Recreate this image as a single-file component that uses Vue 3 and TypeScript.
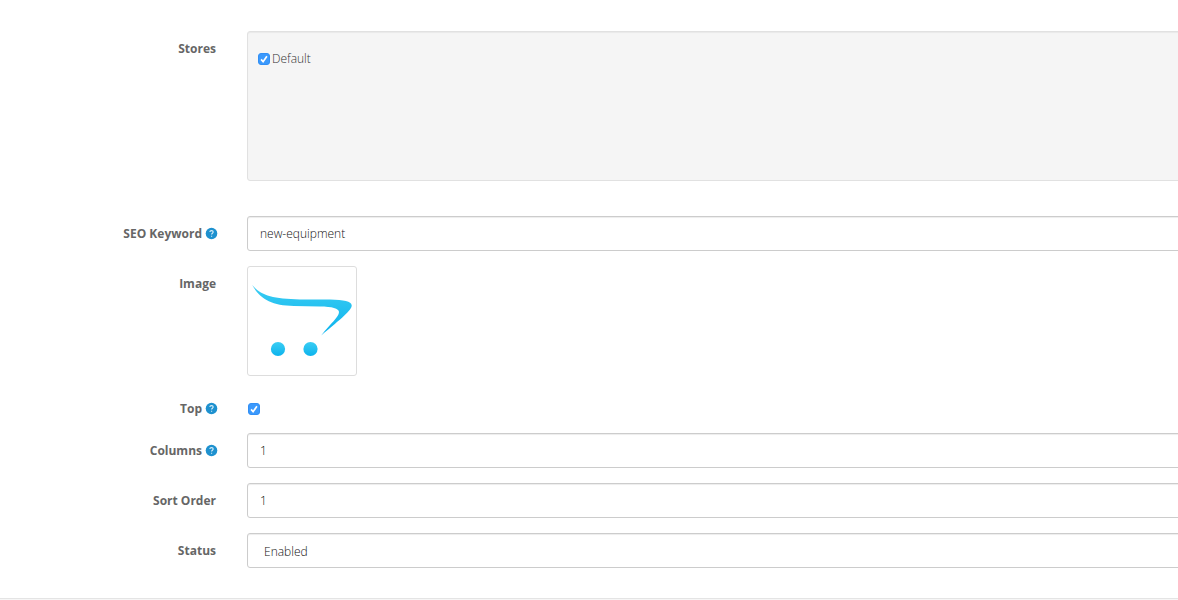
<script setup lang="ts">
import { reactive } from 'vue'

const form = reactive({
  store: true,
  keyword: 'new-equipment',
  top: true,
  columns: '1',
  sortOrder: '1',
  status: '1',
})
</script>

<template>
  <main class="panel">
    <form class="form" @submit.prevent>
      <div class="row" role="group" aria-labelledby="stores-label">
        <span id="stores-label" class="label">Stores</span>
        <div class="field well">
          <label class="option">
            <span class="check">
              <input v-model="form.store" type="checkbox" />
              <svg viewBox="0 0 12 12" aria-hidden="true"><path d="M3.1 6.4 5.1 8.7 8.9 3.2" /></svg>
            </span>
            Default
          </label>
        </div>
      </div>

      <div class="row">
        <label class="label" for="keyword">
          SEO Keyword
          <svg class="help" viewBox="0 0 13 13" aria-hidden="true">
            <circle cx="6.5" cy="6.5" r="5.8" />
            <path d="M4.8 5C5 3.2 8.2 3.2 8.2 5.1C8.2 6.3 6.6 6.3 6.6 7.6M6.6 8.7V9.8" />
          </svg>
        </label>
        <input id="keyword" v-model="form.keyword" class="field control" type="text" />
      </div>

      <div class="row">
        <span class="label">Image</span>
        <div class="field">
          <button class="thumb" type="button" aria-label="Image">
            <svg viewBox="0 0 100 100" aria-hidden="true">
              <defs>
                <linearGradient id="swoosh" x1="0" y1="0" x2="0" y2="1">
                  <stop offset="0" stop-color="#3bcdf3" />
                  <stop offset="1" stop-color="#0cb3ed" />
                </linearGradient>
              </defs>
              <path
                fill="url(#swoosh)"
                d="M.2 14C8 23.8 20 28.2 48 28.4L78 28.6C92 29 99.3 30.3 99.7 34.3C100 39 90 47 69.2 64.4C79 52 87 46 87 41C87 37.5 80 35.6 68 35.5L42 35C19 34.5 8 28 .2 14Z"
              />
              <circle fill="url(#swoosh)" cx="26" cy="78" r="7.1" />
              <circle fill="url(#swoosh)" cx="58.5" cy="78" r="7.1" />
            </svg>
          </button>
        </div>
      </div>

      <div class="row">
        <label class="label" for="top">
          Top
          <svg class="help" viewBox="0 0 13 13" aria-hidden="true">
            <circle cx="6.5" cy="6.5" r="5.8" />
            <path d="M4.8 5C5 3.2 8.2 3.2 8.2 5.1C8.2 6.3 6.6 6.3 6.6 7.6M6.6 8.7V9.8" />
          </svg>
        </label>
        <div class="field toggle">
          <span class="check">
            <input id="top" v-model="form.top" type="checkbox" />
            <svg viewBox="0 0 12 12" aria-hidden="true"><path d="M3.1 6.4 5.1 8.7 8.9 3.2" /></svg>
          </span>
        </div>
      </div>

      <div class="row">
        <label class="label" for="columns">
          Columns
          <svg class="help" viewBox="0 0 13 13" aria-hidden="true">
            <circle cx="6.5" cy="6.5" r="5.8" />
            <path d="M4.8 5C5 3.2 8.2 3.2 8.2 5.1C8.2 6.3 6.6 6.3 6.6 7.6M6.6 8.7V9.8" />
          </svg>
        </label>
        <input id="columns" v-model="form.columns" class="field control" type="text" />
      </div>

      <div class="row">
        <label class="label" for="sort-order">Sort Order</label>
        <input id="sort-order" v-model="form.sortOrder" class="field control" type="text" />
      </div>

      <div class="row">
        <label class="label" for="status">Status</label>
        <select id="status" v-model="form.status" class="field control select">
          <option value="1">Enabled</option>
          <option value="0">Disabled</option>
        </select>
      </div>
    </form>
  </main>
</template>

<style>
body {
  margin: 0;
  background: #f6f6f6;
}
</style>

<style scoped>
.panel {
  overflow: hidden;
  padding: 31px 0 30px;
  background: #fff;
  border-bottom: 1px solid #e4e4e4;
  font: 12px/17px "Open Sans", sans-serif;
  color: #666;
}

.form {
  display: flex;
  flex-direction: column;
  gap: 15px;
  /* Fields run on beyond the right edge of the window. */
  margin-right: -40px;
}

.row {
  display: grid;
  grid-template-columns: 217px minmax(0, 1fr);
  column-gap: 30px;
  align-items: start;
}

.label {
  display: flex;
  justify-content: flex-end;
  align-items: center;
  gap: 3px;
  padding: 9px 1px 0 0;
  font-weight: 700;
}

.help {
  width: 13px;
  height: 13px;
  margin-right: -2px;
}

.help circle {
  fill: #1e91cf;
}

.help path {
  fill: none;
  stroke: #d8edf8;
  stroke-width: 1.1;
}

.field {
  box-sizing: border-box;
  width: 100%;
}

.well {
  height: 150px;
  margin-bottom: 20px;
  padding: 18px 10px;
  overflow: auto;
  background: #f5f5f5;
  border: 1px solid #e1e1e1;
  border-radius: 3px;
  box-shadow: inset 0 1px 1px rgba(0, 0, 0, 0.05);
}

.option {
  display: inline-flex;
  align-items: center;
  gap: 2px;
  font-weight: 300;
  color: #333;
}

.check {
  position: relative;
  display: block;
  width: 12px;
  height: 12px;
}

.check input {
  appearance: none;
  display: block;
  width: 12px;
  height: 12px;
  margin: 0;
  background: #fff;
  border: 1px solid #bbb;
  border-radius: 3px;
}

.check input:checked {
  background: #3b99fc;
  border-color: #318ff5;
}

.check svg {
  position: absolute;
  inset: 0;
  pointer-events: none;
}

.check path {
  fill: none;
  stroke: #fff;
  stroke-width: 1.7;
}

.check input:not(:checked) + svg {
  display: none;
}

.control {
  height: 35px;
  margin: 0;
  padding: 8px 12px;
  font: 300 12px/17px "Open Sans", sans-serif;
  color: #111;
  background: #fff;
  border: 1px solid #ccc;
  border-radius: 3px;
  box-shadow: inset 0 1px 1px rgba(0, 0, 0, 0.075);
}

.select {
  appearance: none;
  padding: 9px 16px 7px;
}

.thumb {
  display: block;
  box-sizing: border-box;
  width: 110px;
  height: 110px;
  padding: 4px;
  background: #fff;
  border: 1px solid #ddd;
  border-radius: 3px;
}

.thumb svg {
  display: block;
  width: 100px;
  height: 100px;
}

.toggle {
  padding: 12px 1px 3px;
}
</style>
